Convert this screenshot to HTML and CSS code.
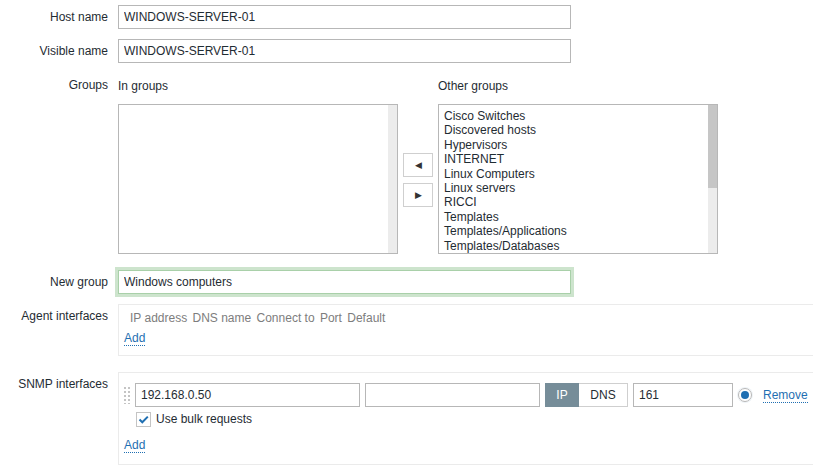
FILE: index.html
```html
<!DOCTYPE html>
<html lang="en">
<head>
    <meta charset="UTF-8">
    <title>Host</title>
    <link rel="stylesheet" href="styles.css">
</head>
<body>
    <div class="form">
        <div class="row">
            <div class="label">Host name</div>
            <div class="field"><input type="text" class="text wide" value="WINDOWS-SERVER-01"></div>
        </div>
        <div class="row">
            <div class="label">Visible name</div>
            <div class="field"><input type="text" class="text wide" value="WINDOWS-SERVER-01"></div>
        </div>
        <div class="row groups-row">
            <div class="label">Groups</div>
            <div class="field groups">
                <div class="group-col">
                    <div class="group-head">In groups</div>
                    <div class="listbox">
                        <div class="items"></div>
                        <div class="scroll"></div>
                    </div>
                </div>
                <div class="arrows">
                    <button class="arrow">&#9664;</button>
                    <button class="arrow">&#9654;</button>
                </div>
                <div class="group-col">
                    <div class="group-head">Other groups</div>
                    <div class="listbox">
                        <div class="items">
                            <div>Cisco Switches</div>
                            <div>Discovered hosts</div>
                            <div>Hypervisors</div>
                            <div>INTERNET</div>
                            <div>Linux Computers</div>
                            <div>Linux servers</div>
                            <div>RICCI</div>
                            <div>Templates</div>
                            <div>Templates/Applications</div>
                            <div>Templates/Databases</div>
                        </div>
                        <div class="scroll"><div class="thumb"></div></div>
                    </div>
                </div>
            </div>
        </div>
        <div class="row newgroup-row">
            <div class="label">New group</div>
            <div class="field"><input type="text" class="text wide focus" value="Windows computers"></div>
        </div>
        <div class="row">
            <div class="label">Agent interfaces</div>
            <div class="field">
                <div class="iface agent">
                    <div class="iface-head">
                        <span>IP address</span>
                        <span>DNS name</span>
                        <span>Connect to</span>
                        <span>Port</span>
                        <span>Default</span>
                    </div>
                    <a class="link add">Add</a>
                </div>
            </div>
        </div>
        <div class="row snmp-row">
            <div class="label">SNMP interfaces</div>
            <div class="field">
                <div class="iface snmp">
                    <div class="iface-line">
                        <div class="handle"></div>
                        <input type="text" class="text ip" value="192.168.0.50">
                        <input type="text" class="text dns" value="">
                        <div class="toggle">
                            <span class="on">IP</span>
                            <span>DNS</span>
                        </div>
                        <input type="text" class="text port" value="161">
                        <span class="radio"><span class="dot"></span></span>
                        <a class="link remove">Remove</a>
                    </div>
                    <div class="bulk">
                        <span class="check">
                            <svg width="13" height="13" viewBox="0 0 13 13"><path d="M2.5 6.5 L5.3 9.3 L10.8 3.6" fill="none" stroke="#1f6fb2" stroke-width="2"/></svg>
                        </span>
                        Use bulk requests
                    </div>
                    <a class="link add">Add</a>
                </div>
            </div>
        </div>
    </div>
</body>
</html>
```

FILE: styles.css
```css
body {
    margin: 0;
    background: #ffffff;
    font-family: "Liberation Sans", Arial, sans-serif;
    font-size: 12px;
    color: #1f2c33;
    overflow: hidden;
}

.form {
    padding-top: 5px;
}

.row {
    display: flex;
    margin-bottom: 10px;
}

.label {
    width: 108px;
    flex: none;
    text-align: right;
    line-height: 24px;
    margin-right: 10px;
    white-space: nowrap;
}

.field {
    flex: none;
}

.text {
    box-sizing: border-box;
    height: 24px;
    border: 1px solid #b7b7b7;
    padding: 0 5px;
    font-family: inherit;
    font-size: 12px;
    color: #1f2c33;
    background: #fff;
    outline: none;
    margin: 0;
}

.text.wide {
    width: 453px;
}

.text.focus {
    border-color: #a9d0a9;
    box-shadow: 0 0 0 3px #cde4cd;
}

.groups-row {
    margin-bottom: 16px;
}

.groups {
    display: flex;
    align-items: flex-end;
}

.group-col {
    display: flex;
    flex-direction: column;
}

.group-head {
    line-height: 24px;
    margin-top: 1px;
    margin-bottom: 6px;
}

.listbox {
    box-sizing: border-box;
    width: 280px;
    height: 150px;
    border: 1px solid #b7b7b7;
    display: flex;
}

.items {
    flex: 1;
    padding: 4px 5px 0;
    line-height: 14.4px;
    overflow: hidden;
}

.scroll {
    width: 9px;
    background: #ececec;
}

.thumb {
    height: 83px;
    background: #c6c6c6;
}

.arrows {
    display: flex;
    flex-direction: column;
    gap: 6px;
    margin: 0 5px 47px 5px;
}

.arrow {
    width: 30px;
    height: 24px;
    padding: 0;
    border: 1px solid #cfcfcf;
    background: #fff;
    color: #333;
    font-size: 9px;
    line-height: 22px;
}

.iface {
    box-sizing: border-box;
    width: 720px;
    border: 1px solid #ebebeb;
    padding-left: 5px;
}

.agent {
    padding-top: 6px;
    padding-bottom: 9px;
}

.iface-head {
    line-height: 14px;
    color: #7d7d7d;
    padding-left: 6px;
}

.iface-head span {
    margin-right: 2px;
}

.link {
    display: inline-block;
    color: #1f6fb2;
    line-height: 14px;
    border-bottom: 1px dotted #1f6fb2;
    cursor: pointer;
}

.agent .add {
    margin-top: 6px;
}

.snmp-row {
    margin-top: 16px;
}

.snmp {
    padding-top: 10px;
    padding-bottom: 11px;
    padding-left: 4px;
}

.iface-line {
    display: flex;
    align-items: center;
}

.handle {
    width: 7px;
    height: 18px;
    margin-right: 5px;
    background-image: radial-gradient(circle, #c4c4c4 1px, transparent 1.2px);
    background-size: 4px 4px;
}

.ip {
    width: 225px;
    margin-right: 5px;
}

.dns {
    width: 175px;
    margin-right: 5px;
}

.toggle {
    display: flex;
    height: 24px;
    margin-right: 5px;
}

.toggle span {
    box-sizing: border-box;
    line-height: 22px;
    border: 1px solid #cfcfcf;
    text-align: center;
}

.toggle span:first-child {
    width: 34px;
}

.toggle span:last-child {
    width: 49px;
    border-left: none;
}

.toggle .on {
    background: #768d99;
    border-color: #768d99;
    color: #fff;
}

.port {
    width: 100px;
    margin-right: 5px;
}

.radio {
    box-sizing: border-box;
    width: 14px;
    height: 14px;
    border: 1px solid #b7b7b7;
    border-radius: 50%;
    display: flex;
    align-items: center;
    justify-content: center;
    margin-right: 11px;
    box-shadow: 0 0 0 1px #eef3f7;
}

.dot {
    width: 8px;
    height: 8px;
    border-radius: 50%;
    background: #1f6fb2;
}

.bulk {
    display: flex;
    align-items: center;
    margin-top: 4px;
    margin-left: 13px;
    line-height: 16px;
}

.check {
    box-sizing: border-box;
    width: 15px;
    height: 15px;
    border: 1px solid #c4c4c4;
    display: flex;
    align-items: center;
    justify-content: center;
    margin-right: 5px;
}

.snmp .add {
    margin-top: 11px;
    margin-left: 1px;
}
```
